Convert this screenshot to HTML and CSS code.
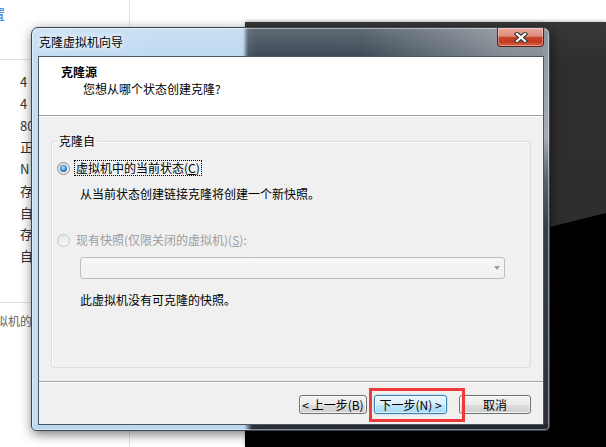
FILE: index.html
```html
<!DOCTYPE html>
<html lang="zh-CN">
<head>
<meta charset="utf-8">
<title>克隆虚拟机向导</title>
<link rel="stylesheet" href="styles.css">
</head>
<body>
<div class="desktop">
  <div class="app">
    <div class="pane">
      <div class="pane-head"><span class="crumb">置</span></div>
      <ul class="rows">
        <li>4</li><li>4</li><li>80</li><li>正</li><li>N</li><li>存</li><li>自</li><li>存</li><li>自</li>
      </ul>
      <div class="pane-foot"><span>拟机的</span></div>
    </div>
  </div>

  <div class="bgwin"></div>

  <div class="dialog">
    <div class="titlebar">
      <span class="title">克隆虚拟机向导</span>
      <button class="close" aria-label="关闭">
        <svg width="14" height="11" viewBox="0 0 14 11">
          <path d="M3 2 L11 9 M11 2 L3 9" stroke="#3b3b3b" stroke-width="4.4" stroke-linecap="square" fill="none"/>
          <path d="M3 2 L11 9 M11 2 L3 9" stroke="#ffffff" stroke-width="2.2" stroke-linecap="square" fill="none"/>
        </svg>
      </button>
    </div>
    <div class="client">
      <div class="header">
        <div class="h-title">克隆源</div>
        <div class="h-sub">您想从哪个状态创建克隆?</div>
      </div>
      <div class="sep"></div>
      <div class="body">
        <fieldset class="group">
          <legend>克隆自</legend>
          <div class="opt">
            <span class="radio on"></span>
            <span class="label focus">虚拟机中的当前状态(<u>C</u>)</span>
          </div>
          <p class="desc">从当前状态创建链接克隆将创建一个新快照。</p>
          <div class="opt opt2 disabled">
            <span class="radio off"></span>
            <span class="label">现有快照(仅限关闭的虚拟机)(<u>S</u>):</span>
          </div>
          <div class="combo"><span class="arrow"></span></div>
          <p class="note">此虚拟机没有可克隆的快照。</p>
        </fieldset>
      </div>
      <div class="sep"></div>
      <div class="footer">
        <button class="btn back">&lt; 上一步(B)</button>
        <button class="btn next">下一步(N) &gt;</button>
        <button class="btn cancel">取消</button>
      </div>
    </div>
  </div>

  <div class="annot"></div>
</div>
</body>
</html>
```
FILE: styles.css
```css
* { box-sizing: border-box; }
html, body { margin: 0; padding: 0; }
body {
  font-family: "Noto Sans CJK SC", "Liberation Sans", sans-serif;
  font-size: 12px;
  color: #000;
}
.desktop {
  position: relative;
  width: 606px;
  height: 447px;
  overflow: hidden;
  background: #fff;
}

/* background application (left) */
.app { height: 447px; }
.pane {
  width: 130px;
  height: 447px;
  border-right: 1px solid #e2e2e2;
}
.pane-head {
  height: 60px;
  border-bottom: 1px solid #e2e2e2;
  padding-top: 6px;
  line-height: 16px;
}
.crumb {
  display: inline-block;
  margin-left: -8px;
  font-size: 13px;
  color: #2a72cf;
}
.rows {
  list-style: none;
  margin: 0;
  padding: 11px 0 0 20px;
  height: 243px;
  border-bottom: 1px solid #e2e2e2;
}
.rows li {
  height: 21.75px;
  line-height: 21.75px;
  font-size: 13px;
  color: #333;
  white-space: nowrap;
}
.pane-foot {
  padding-top: 10px;
  line-height: 16px;
  color: #666;
  font-size: 12px;
}
.pane-foot span { display: inline-block; margin-left: -4px; }

/* dark window behind */
.bgwin {
  position: absolute;
  left: 245px;
  top: 22px;
  right: 0;
  bottom: 0;
  background: linear-gradient(180deg, #383838 0, #2f2f2f 40px, #2c2c2c 100%);
  box-shadow: 0 -1px 3px rgba(0,0,0,0.25);
}
.bgwin::after {
  content: "";
  position: absolute;
  inset: 0;
  background: #000;
  clip-path: polygon(0 281px, 100% 191px, 100% 100%, 0 100%);
}

/* dialog window */
.dialog {
  position: absolute;
  left: 31px;
  top: 27px;
  width: 519px;
  height: 404px;
  border: 1px solid #3b4652;
  border-radius: 7px 7px 5px 5px;
  display: flex;
  flex-direction: column;
  box-shadow: 1px 3px 12px rgba(0,0,0,0.55), inset 0 0 0 1px rgba(255,255,255,0.45);
  background:
    linear-gradient(90deg, #bcd8f1 0, #bcd8f1 212px, #2a3036 220px, #22272c 100%) left bottom / 100% 6px no-repeat,
    linear-gradient(180deg, #8d949b 0, #a5abb1 110px, #5c636a 150px, #383e45 200px, #2c3138 100%) right top / 6px 100% no-repeat,
    linear-gradient(180deg, rgba(255,255,255,0.18) 0, rgba(255,255,255,0) 28px) left top / 100% 28px no-repeat,
    linear-gradient(90deg, #c3ddf4 0, #bdd8f0 211px, #4a5764 216px, #3e4a57 224px, #3f4b58 330px, #6a747e 420px, #838b93 470px, #899198 519px);
}
.titlebar {
  height: 28px;
  display: flex;
  align-items: center;
  justify-content: space-between;
  padding: 0 5px 0 7px;
}
.title {
  font-size: 12px;
  line-height: 16px;
  color: #000;
  text-shadow: 0 0 8px #fff, 0 0 4px rgba(255,255,255,0.9);
}
.close {
  align-self: flex-start;
  width: 47px;
  height: 19px;
  padding: 0;
  border: 1px solid #5e2118;
  border-top: none;
  border-radius: 0 0 4px 4px;
  background: linear-gradient(180deg, #e9aa9c 0%, #dc8c7c 45%, #c8462c 52%, #c13a1f 75%, #dc6446 100%);
  box-shadow: inset 0 0 0 1px rgba(255,255,255,0.35);
  display: flex;
  align-items: center;
  justify-content: center;
}
.close svg { display: block; }

.client {
  margin: 0 5px 0 6px;
  height: 369px;
  border: 1px solid #4b5763;
  background: #f0f0f0;
  display: flex;
  flex-direction: column;
}
.header {
  height: 58px;
  background: #fff;
  padding: 7px 0 0 22px;
}
.h-title {
  font-weight: bold;
  line-height: 16px;
}
.h-sub {
  line-height: 16px;
  margin: 1px 0 0 22px;
}
.sep {
  height: 2px;
  border-top: 1px solid #a0a0a0;
  border-bottom: 1px solid #ffffff;
}
.body {
  height: 264px;
  padding: 16px 12px 13px 12px;
  display: flex;
  flex-direction: column;
}
.group {
  flex: 1;
  margin: 0;
  padding: 0;
  min-width: 0;
  border: 1px solid #d5dfe5;
  border-radius: 3px;
  box-shadow: inset 1px 1px 0 #fafcfd;
}
.group legend {
  margin-left: 5px;
  padding: 0 2px;
  line-height: 16px;
}
.opt {
  display: flex;
  align-items: center;
  height: 16px;
  margin-top: 11px;
  padding-left: 5px;
}
.radio {
  position: relative;
  width: 13px;
  height: 13px;
  border-radius: 50%;
  flex: none;
}
.radio.on {
  border: 1px solid #8e8f8f;
  background: linear-gradient(135deg, #d4d4d4, #f6f6f6);
}
.radio.on::after {
  content: "";
  position: absolute;
  left: 2px;
  top: 2px;
  width: 7px;
  height: 7px;
  border-radius: 50%;
  background: radial-gradient(circle at 45% 40%, #c5ecff 0, #5fb0ea 30%, #1f5f9e 75%, #153f6c 100%);
}
.radio.off {
  border: 1px solid #c5c5c5;
  background: linear-gradient(135deg, #e6e6e6, #f7f7f7);
}
.label {
  margin-left: 4px;
  padding: 0 1px;
  line-height: 14px;
  border: 1px solid transparent;
  white-space: nowrap;
}
.label.focus { border: 1px dotted #000; }
.disabled .label { color: #9d9d9d; }
.desc {
  margin: 10px 0 0 28px;
  line-height: 16px;
}
.opt2 { margin-top: 30px; }
.combo {
  margin: 9px 0 0 28px;
  width: 425px;
  height: 22px;
  border: 1px solid #bdbdbd;
  border-radius: 3px;
  background: linear-gradient(#f6f6f6, #f1f1f1);
  display: flex;
  align-items: center;
  justify-content: flex-end;
  padding-right: 4px;
}
.arrow {
  width: 0;
  height: 0;
  border-left: 3.5px solid transparent;
  border-right: 3.5px solid transparent;
  border-top: 4px solid #9c9c9c;
}
.note {
  margin: 13px 0 0 28px;
  line-height: 16px;
}
.footer {
  flex: 1;
  display: flex;
  justify-content: flex-end;
  align-items: flex-start;
  padding: 12px 12px 0 0;
}
.btn {
  height: 19px;
  padding: 0;
  font-family: inherit;
  font-size: 12px;
  line-height: 17px;
  color: #000;
  border: 1px solid #707070;
  border-radius: 3px;
  background: linear-gradient(180deg, #f2f2f2 0%, #ebebeb 50%, #dddddd 50%, #cfcfcf 100%);
  box-shadow: inset 0 0 0 1px rgba(255,255,255,0.75);
  white-space: nowrap;
}
.back { width: 68px; }
.next {
  width: 73px;
  margin-left: 7px;
  border-color: #3c7fb1;
  background: linear-gradient(180deg, #eaf6fd 0%, #d9f0fc 50%, #bee6fd 50%, #a7d9f5 100%);
  box-shadow: inset 0 0 0 1px rgba(255,255,255,0.6), 0 0 2px rgba(60,160,230,0.6);
}
.cancel { width: 72px; margin-left: 12px; }

/* annotation overlay */
.annot {
  position: absolute;
  left: 369px;
  top: 388px;
  width: 96px;
  height: 34px;
  border: 3px solid #ee3a3a;
}
```
